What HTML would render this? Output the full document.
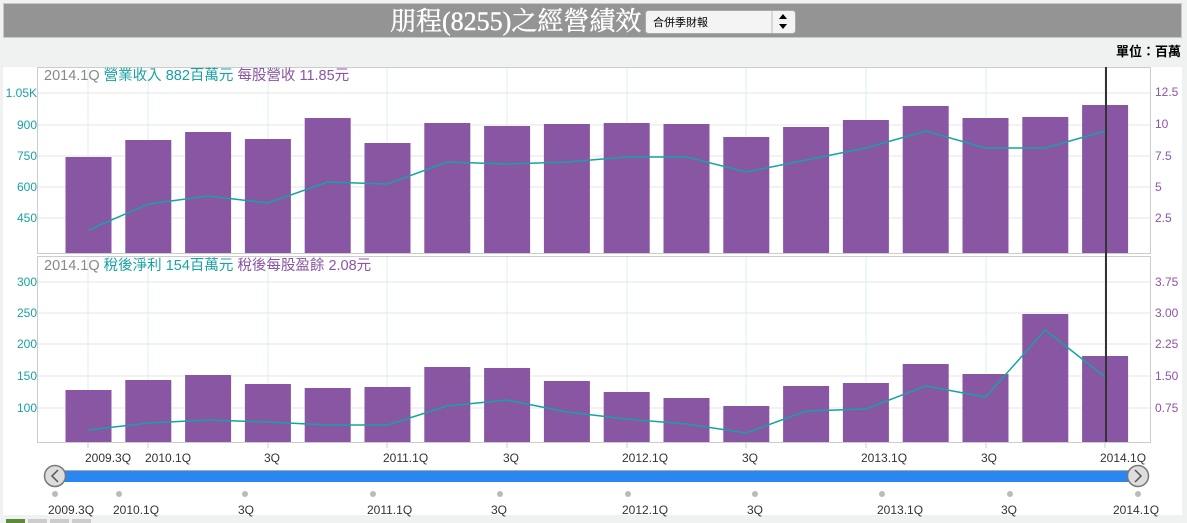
<!DOCTYPE html>
<html><head><meta charset="utf-8"><style>
body{margin:0;width:1187px;height:523px;background:#f0f2f1;overflow:hidden;font-family:"Liberation Sans","Noto Sans CJK TC",sans-serif}
</style></head><body>
<svg id="s" width="1187" height="523" xmlns="http://www.w3.org/2000/svg" style="position:absolute;left:0;top:0">
<rect x="3.5" y="3.5" width="1178" height="34" fill="#949494" stroke="#c8c8c8"/>
<text x="390" y="30" font-family="Liberation Serif,Noto Serif CJK SC,serif" font-size="26" fill="#fff" stroke="#fff" stroke-width="0.4">朋程(8255)之經營績效</text>
<rect x="645.5" y="10.5" width="150" height="23" rx="3" fill="#f4f4f4" stroke="#aaa"/>
<line x1="772" y1="11" x2="772" y2="33" stroke="#bbb"/>
<text x="653" y="26" font-size="11" fill="#000" font-family="Liberation Sans,Noto Sans CJK TC,sans-serif">合併季財報</text>
<path d="M779 19 L787 19 L783 14Z M779 24 L787 24 L783 29Z" fill="#000"/>
<text x="1181" y="56" text-anchor="end" font-size="13" font-weight="bold" fill="#000" font-family="Liberation Sans,Noto Sans CJK TC,sans-serif">單位：百萬</text>
<rect x="3" y="67" width="1179" height="448" fill="#fff"/>
<g id="grid"></g>
<rect x="37.5" y="67.5" width="1113" height="186" fill="none" stroke="#ccc"/>
<rect x="37.5" y="256.5" width="1113" height="186" fill="none" stroke="#ccc"/>
<g id="bars"></g>
<line x1="1106" y1="67" x2="1106" y2="442" stroke="#333" stroke-width="2"/>
<g font-size="12" font-family="Liberation Sans,Noto Sans CJK TC,sans-serif">
<text x="44" y="80" font-size="14.5" fill="#888">2014.1Q <tspan fill="#17a2a4">營業收入 882百萬元</tspan> <tspan fill="#8b55a5">每股營收 11.85元</tspan></text>
<text x="44" y="270" font-size="14.5" fill="#888">2014.1Q <tspan fill="#17a2a4">稅後淨利 154百萬元</tspan> <tspan fill="#8b55a5">稅後每股盈餘 2.08元</tspan></text>
<g fill="#17a2a4" text-anchor="end">
<text x="37" y="97">1.05K</text><text x="37" y="129">900</text><text x="37" y="160">750</text><text x="37" y="191">600</text><text x="37" y="222">450</text>
<text x="37" y="286">300</text><text x="37" y="317">250</text><text x="37" y="348">200</text><text x="37" y="380">150</text><text x="37" y="412">100</text>
</g>
<g fill="#8b55a5">
<text x="1155" y="96">12.5</text><text x="1155" y="128">10</text><text x="1155" y="160">7.5</text><text x="1155" y="191">5</text><text x="1155" y="222">2.5</text>
<text x="1155" y="286">3.75</text><text x="1155" y="317">3.00</text><text x="1155" y="348">2.25</text><text x="1155" y="380">1.50</text><text x="1155" y="412">0.75</text>
</g>
<g fill="#333">
<text x="85" y="462">2009.3Q</text><text x="145" y="462">2010.1Q</text><text x="264" y="462">3Q</text><text x="383" y="462">2011.1Q</text><text x="503" y="462">3Q</text><text x="622" y="462">2012.1Q</text><text x="742" y="462">3Q</text><text x="861" y="462">2013.1Q</text><text x="981" y="462">3Q</text><text x="1100" y="462">2014.1Q</text>
<text x="48" y="514">2009.3Q</text><text x="113" y="514">2010.1Q</text><text x="238" y="514">3Q</text><text x="367" y="514">2011.1Q</text><text x="491" y="514">3Q</text><text x="622" y="514">2012.1Q</text><text x="747" y="514">3Q</text><text x="877" y="514">2013.1Q</text><text x="1001" y="514">3Q</text><text x="1113" y="514">2014.1Q</text>
</g>
</g>
<rect x="55" y="470" width="1083" height="12" fill="#2b87f0"/>
<line x1="55" y1="470.5" x2="1138" y2="470.5" stroke="#aaa"/>
<g id="dots"></g>
<circle cx="55" cy="476" r="10.5" fill="#ddd" stroke="#777" stroke-width="1.5"/>
<path d="M58 470 L52 476 L58 482" fill="none" stroke="#555" stroke-width="1.5"/>
<circle cx="1138" cy="476" r="10.5" fill="#ddd" stroke="#777" stroke-width="1.5"/>
<path d="M1135 470 L1141 476 L1135 482" fill="none" stroke="#555" stroke-width="1.5"/>
<rect x="6" y="519" width="19" height="4" fill="#5a8a3a"/><rect x="28" y="519" width="19" height="4" fill="#ccc"/><rect x="50" y="519" width="19" height="4" fill="#ccc"/><rect x="72" y="519" width="19" height="4" fill="#ccc"/>
</svg>
<script>
var N='http://www.w3.org/2000/svg';
function el(p,t,a){var e=document.createElementNS(N,t);for(var k in a)e.setAttribute(k,a[k]);document.getElementById(p).appendChild(e);}
var cx=[];for(var i=0;i<18;i++)cx.push(88.5+i*59.8);
[88,148,268,387,507,627,746,866,986,1105].forEach(function(x){el('grid','line',{x1:x,y1:67,x2:x,y2:253,stroke:'#dcedf5'});el('grid','line',{x1:x,y1:256,x2:x,y2:442,stroke:'#dcedf5'});el('grid','line',{x1:x,y1:442,x2:x,y2:448,stroke:'#ccc'});});
[93,125,156,187,218,282,313,344,376,408].forEach(function(y){el('grid','line',{x1:38,y1:y,x2:1150,y2:y,stroke:'#e6e6e6'});});
var t1=[157,140,132,139,118,143,123,126,124,123,124,137,127,120,106,118,117,105];
var l1=[230,204,196,203,182,184,162,164,162,157,157,172,160,148,131,148,148,131];
var t2=[390,380,375,384,388,387,367,368,381,392,398,406,386,383,364,374,314,356];
var l2=[430,423,420,422,425,425,406,400,412,419,424,433,411,409,386,397,330,377];
for(var i=0;i<18;i++){el('bars','rect',{x:cx[i]-23,y:t1[i],width:46,height:253-t1[i],fill:'#8856a2'});el('bars','rect',{x:cx[i]-23,y:t2[i],width:46,height:442-t2[i],fill:'#8856a2'});}
function pl(l){return l.map(function(y,i){return cx[i]+','+y}).join(' ');}
el('bars','polyline',{points:pl(l1),fill:'none',stroke:'#17a2a4','stroke-width':1.5});
el('bars','polyline',{points:pl(l2),fill:'none',stroke:'#17a2a4','stroke-width':1.5});
[55,119,245,373,500,628,755,882,1010,1138].forEach(function(x){el('dots','circle',{cx:x,cy:494,r:3,fill:'#bbb'});});
</script>
</body></html>
